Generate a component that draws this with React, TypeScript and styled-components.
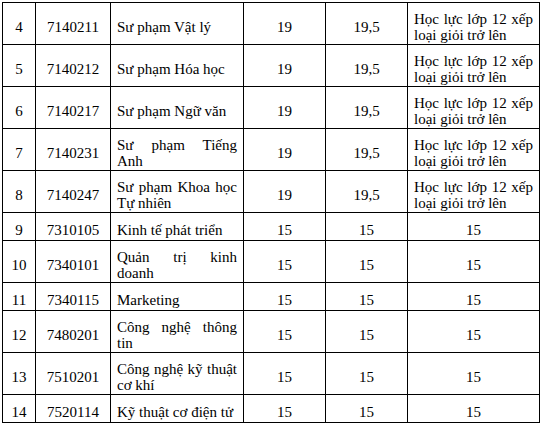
import React from 'react';
import styled, { createGlobalStyle, css } from 'styled-components';

const SERIF = "'Liberation Serif', 'Times New Roman', serif";

const GlobalStyle = createGlobalStyle`
  html, body {
    margin: 0;
    padding: 0;
    background: #ffffff;
    font-family: ${SERIF};
  }
`;

type Align = 'center' | 'justify';

interface IRow {
  no: number;
  code: string;
  name: string;
  min: string;
  score: string;
  note: string;
  tall?: boolean;
}

const NOTE = 'Học lực lớp 12 xếp loại giỏi trở lên';

const rows: IRow[] = [
  { no: 4, code: '7140211', name: 'Sư phạm Vật lý', min: '19', score: '19,5', note: NOTE, tall: true },
  { no: 5, code: '7140212', name: 'Sư phạm Hóa học', min: '19', score: '19,5', note: NOTE, tall: true },
  { no: 6, code: '7140217', name: 'Sư phạm Ngữ văn', min: '19', score: '19,5', note: NOTE, tall: true },
  { no: 7, code: '7140231', name: 'Sư phạm Tiếng Anh', min: '19', score: '19,5', note: NOTE, tall: true },
  { no: 8, code: '7140247', name: 'Sư phạm Khoa học Tự nhiên', min: '19', score: '19,5', note: NOTE, tall: true },
  { no: 9, code: '7310105', name: 'Kinh tế phát triển', min: '15', score: '15', note: '15' },
  { no: 10, code: '7340101', name: 'Quản trị kinh doanh', min: '15', score: '15', note: '15', tall: true },
  { no: 11, code: '7340115', name: 'Marketing', min: '15', score: '15', note: '15' },
  { no: 12, code: '7480201', name: 'Công nghệ thông tin', min: '15', score: '15', note: '15', tall: true },
  { no: 13, code: '7510201', name: 'Công nghệ kỹ thuật cơ khí', min: '15', score: '15', note: '15', tall: true },
  { no: 14, code: '7520114', name: 'Kỹ thuật cơ điện tử', min: '15', score: '15', note: '15' },
];

const Page = styled.div`
  padding: 2px 0 0 2px;
`;

const Table = styled.table`
  border-collapse: collapse;
  table-layout: fixed;
  width: 537px;
  font-family: ${SERIF};
  font-size: 15px;
  line-height: 16px;
  color: #000000;
`;

const Col = styled.col<{ $w: number }>`
  width: ${({ $w }) => $w}px;
`;

const Row = styled.tr<{ $tall?: boolean }>`
  height: ${({ $tall }) => ($tall ? 42 : 28)}px;
`;

// Word-style cell: text sits a little below the middle
const Cell = styled.td<{ $align?: Align }>`
  border: 1px solid #000000;
  padding: 6px 6px 0;
  vertical-align: middle;
  font-family: ${SERIF};
  font-size: 15px;
  ${({ $align = 'center' }) =>
    $align === 'justify'
      ? css`
          text-align: justify;
        `
      : css`
          text-align: center;
        `}
`;

const widths = [33, 75, 133, 82, 82, 132];

export default function App() {
  return (
    <Page>
      <GlobalStyle />
      <Table>
        <colgroup>
          {widths.map((w, i) => (
            <Col key={i} $w={w} />
          ))}
        </colgroup>
        <tbody>
          {rows.map((r) => (
            <Row key={r.no} $tall={r.tall}>
              <Cell>{r.no}</Cell>
              <Cell>{r.code}</Cell>
              <Cell $align="justify">{r.name}</Cell>
              <Cell>{r.min}</Cell>
              <Cell>{r.score}</Cell>
              <Cell $align={r.note.length > 4 ? 'justify' : 'center'}>{r.note}</Cell>
            </Row>
          ))}
        </tbody>
      </Table>
    </Page>
  );
}
